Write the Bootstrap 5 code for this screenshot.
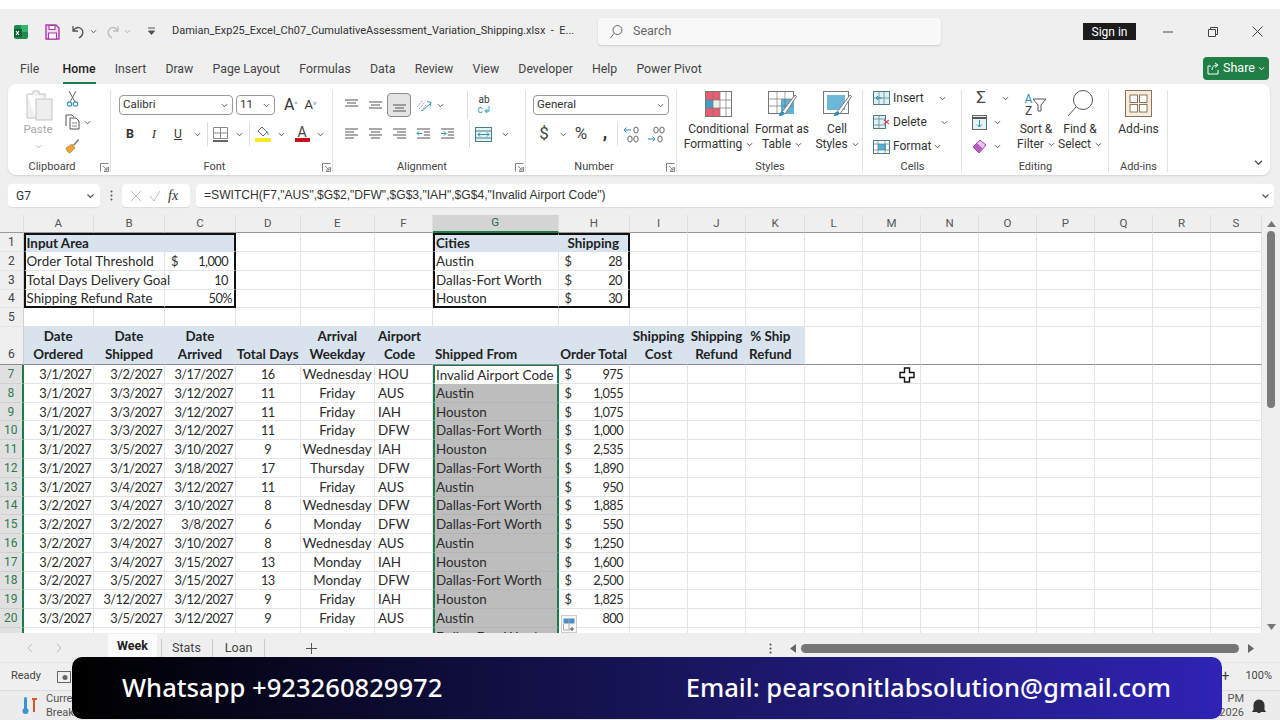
<!DOCTYPE html>
<html lang="en">
<head>
<meta charset="utf-8">
<title>Excel</title>
<link href="https://cdn.jsdelivr.net/npm/bootstrap@5.3.0/dist/css/bootstrap.min.css" rel="stylesheet">
<style>
html,body{margin:0;width:1280px;height:720px;overflow:hidden}
body{background:#efefef;font-family:Roboto,"Liberation Sans",sans-serif;font-size:12px;color:#333;position:relative}
svg{display:block;flex:none}
.strip{height:9px;background:#fff}
.titlebar{height:45px;padding-left:14px}
.doc-title{margin-left:9px;width:426px;font-size:11px;color:#333;white-space:nowrap}
.search{width:343px;height:27px;background:#f8f8f8;border-radius:4px;box-shadow:0 1px 2px #ccc;padding-left:10px;color:#666;gap:9px;font-size:12.5px}
.signin{width:53px;height:17px;background:#1c1c1c;color:#fff;font-size:12px;margin-left:142px}
.winbtn{width:45px}
.tabs{height:27px;margin-top:1px;margin-bottom:2px;padding:1px 11px 0 20px;gap:19.2px;font-size:12.3px;color:#444}
.tab-home{position:relative;color:#222;font-weight:500;margin-left:4px}
.tab-home::after{content:"";position:absolute;left:0;right:0;bottom:-6px;height:2px;background:#1b7c4b}
.share{width:66px;height:23px;background:#1f7f45;color:#fff;border-radius:4px;gap:3px;font-size:12.5px;margin-top:-1px}
.ribbon{height:91px;margin:0 10px 0 8px;background:#fff;border-radius:8px;box-shadow:0 1px 2px #d4d4d4}
.grp{display:flex;flex-direction:column;position:relative;padding-top:6px}
.grp::after{content:"";position:absolute;right:0;top:6px;bottom:3px;width:1px;background:#e2e2e2}
.g-clip{width:103px}.g-font{width:222px}.g-align{width:193px}.g-num{width:151px}.g-sty{width:186px}.g-cell{width:99px}.g-edit{width:147px}.g-add{width:59px}
.gbody{height:69px;flex:none}
.lbl{display:grid;grid-template-columns:1fr auto 1fr;align-items:center;font-size:11px;color:#444;padding-right:2px;height:16px}
.lbl svg{justify-self:end}
.lbl .ml{margin-right:13px}
.ib{display:flex;align-items:center;justify-content:center;height:24px;width:24px;flex:none}
.ib.w12{width:12px}.ib.w14{width:14px}
.vsep{width:1px;height:24px;background:#ddd;flex:none}
.rowa{height:24px;margin-top:3px}
.rowb{height:24px;margin-top:5px}
.combo{border:1px solid #999;border-radius:4px;background:#fff;padding:0 4px 0 3px;font-size:11.5px;color:#333;height:20px}
.big{display:flex;flex-direction:column;align-items:center;text-align:center;line-height:15px;font-size:12px;color:#333}
.big .art{height:27px;margin-bottom:5px;display:flex;align-items:flex-end}
.cellrow{height:24px;gap:3px}
.up{margin-top:-4px}
.formula{height:23px;margin:9px 6px 8px 8px;gap:3px}
.fbox{background:#fff;border-radius:4px;height:23px;box-shadow:0 1px 1px #dcdcdc}
.namebox{width:92px;padding:0 5px 0 8px;font-size:12px}
.fxbox{width:68px;padding:0 8px;gap:7px;color:#999;margin-left:6px}
.ftext{flex:1;padding:0 4px 0 8px;font-family:"Liberation Sans",sans-serif;font-size:12.1px;color:#333;margin-left:3px}
.sheet{height:419px}
.gridwrap{width:1262px;height:418px;overflow:hidden;background:#fff}
.grid{display:grid;grid-template-columns:23.5px 70.5px 71px 71px 64.5px 74.5px 58px 125.5px 71.5px 58px 58px 59px 58px 58px 58px 58px 58px 58px 58px 51px;grid-template-rows:18.2px repeat(5,18.8px) 38px repeat(15,18.77px);width:1262px;margin:0;font-family:Lato,"Liberation Sans",sans-serif;font-size:13.4px;color:#2c2c2c}
.grid thead,.grid tbody,.grid tr{display:contents}
.grid td,.grid th{display:flex;align-items:center;padding:0 3px;white-space:nowrap;box-sizing:border-box;border-right:1px solid #e4e4e4;border-bottom:1px solid #e4e4e4;font-weight:400;min-width:0}
.grid thead th{background:#efefef;justify-content:center;color:#555;font-family:Roboto,sans-serif;font-size:11.5px;border-right:1px solid #dedede;border-bottom:1px solid #999}
.grid thead th.on{background:#d4d4d4;color:#2a6a47;border-bottom:2px solid #1b7c4b}
.grid tbody th{background:#efefef;justify-content:center;color:#444;font-family:Roboto,sans-serif;font-size:12px;border-right:1px solid #cfcfcf;padding:0}
.grid tbody th.on{background:#e0e0e0;color:#2f7a52;border-right:2px solid #1b7c4b;border-bottom-color:#d0d0d0}
.grid .s2{grid-column:span 2;border-right-color:#e4e4e4}
.grid .s3{grid-column:span 3}
.grid .fill{background:#d8e3ee;font-weight:700;color:#222;border-color:#d8e3ee}
.grid .hd{flex-direction:column;justify-content:flex-end;align-items:center;line-height:18.7px;text-align:center;padding:0}
.grid .hl{align-items:flex-start;padding-left:3px}
.grid .hk{align-items:flex-start;padding-left:3px}
.grid .line{border-bottom:1px solid #8d8d8d}
.r{justify-content:flex-end}.c{justify-content:center}
.grid td.r,.grid td.cur,.grid td.c:nth-child(5){font-size:12.8px;letter-spacing:-.55px;padding-top:1px}
.grid td.rp{padding-right:2px}
.grid td.rm{padding-right:6px}
.grid td.cur{justify-content:space-between;padding:1px 6px 0}
.grid td.bT{border-top:2px solid #111}
.grid td.bB{border-bottom:2px solid #111}
.grid td.bL{border-left:2px solid #111;padding-left:1px}
.grid td.bR{border-right:2px solid #111}
.grid td.sg{border-left:2px solid #1b7c4b;border-right:2px solid #1b7c4b;background:#bdbdbd;border-bottom-color:#b4b4b4;padding-left:1px}
.grid td.sg1{background:#fff;border-top:1px solid #1b7c4b;border-bottom-color:#fff}
.vscroll{width:18px;padding-top:6px}
.thumb-v{width:8px;height:177px;background:#7b7b7b;border-radius:4px;margin:4px 0 auto}
.sheettabs{height:28px;padding-left:26px;color:#444;font-size:12.5px}
.stab{height:28px;display:flex;align-items:center;margin-left:5px;padding:0 5px}
.stab-on{background:#fbfbfb;width:49px;margin-left:45px;padding:0 0 3px;border-radius:0 0 4px 4px;font-weight:700;font-size:12.5px;color:#222;position:relative}
.stab-on::after{content:"";position:absolute;left:8px;right:8px;bottom:3px;height:2px;background:#1b7c4b}
.tsep{width:1px;height:18px;background:#ccc}
.thumb-h{width:438px;height:9px;background:#767676;border-radius:5px}
.status{height:28px;padding:0 8px 0 11px;border-top:1px solid #e4e4e4;font-size:11px;color:#444}
.taskbar{height:30px;background:#ececec;padding:0 14px 0 22px;border-top:1px solid #ddd;font-size:11px;color:#555}
.taskbar small{font-size:11px;line-height:14px}
.banner{position:absolute;left:72px;top:657px;width:1150px;height:62px;border-radius:10px;background:linear-gradient(90deg,#000 0%,#0b0a2c 25%,#1a1660 55%,#2e23b4 100%);color:#fff;padding:0 51px 0 50px;font-family:"Noto Sans",sans-serif;font-weight:500;font-size:25.6px;z-index:5}
.qa{position:absolute;left:561px;top:615px;width:16px;height:18px;background:#f7f7f7;border:1px solid #ccc;z-index:3}
.cursor{position:absolute;left:899px;top:367px;z-index:3}
</style>
</head>
<body>
<svg width="0" height="0" class="position-absolute">
<defs>
<symbol id="cv" viewBox="0 0 8 6"><path d="M1 1.5 4 4.5 7 1.5" fill="none" stroke="#555" stroke-width="1.2"/></symbol>
<symbol id="cvw" viewBox="0 0 8 6"><path d="M1 1.5 4 4.5 7 1.5" fill="none" stroke="#fff" stroke-width="1.2"/></symbol>
<symbol id="lau" viewBox="0 0 9 9"><path d="M.5 8.5V.5h8M8.5 4v4.5H4M3 3l4 4M7 4v3H4" fill="none" stroke="#777" stroke-width=".9"/></symbol>
</defs>
</svg>

<div class="strip"></div>

<div class="titlebar d-flex align-items-center">
  <svg width="14" height="14" viewBox="0 0 14 14"><rect x="0" y="0" width="14" height="14" rx="2" fill="#1f8a50"/><rect x="7" y="0" width="7" height="7" fill="#35b36f"/><rect x="0" y="4" width="8" height="8" fill="#0f5f33"/><path d="M2 6l3 4M5 6l-3 4" stroke="#fff" stroke-width="1.1"/></svg>
  <div class="ib" style="margin-left:12px"><svg width="15" height="16" viewBox="0 0 15 16"><path d="M1 1h10l3 3v11H1z" fill="#f3dcf3" stroke="#a83ca8" stroke-width="1.4"/><path d="M4 1.5h6v4H4zM3.5 9h8v6h-8z" fill="#fff" stroke="#a83ca8" stroke-width="1.2"/></svg></div>
  <div class="ib" style="margin-left:2px"><svg width="15" height="14" viewBox="0 0 15 14"><path d="M2 1v5h5M2 6c2-3 5-4 7-3 4 2 4 7-1 10" fill="none" stroke="#555" stroke-width="1.3"/></svg></div>
  <svg width="7" height="5"><use href="#cv"/></svg>
  <div class="ib" style="margin-left:3px"><svg width="15" height="14" viewBox="0 0 15 14"><path d="M13 1v5H8M13 6c-2-3-5-4-7-3-4 2-4 7 1 10" fill="none" stroke="#bdbdbd" stroke-width="1.3"/></svg></div>
  <svg width="7" height="5" opacity=".4"><use href="#cv"/></svg>
  <div class="ib" style="margin-left:8px"><svg width="9" height="9" viewBox="0 0 9 9"><path d="M1 1h7M1.5 4 4.500 7.500 7.500 4z" fill="#555" stroke="#555"/></svg></div>
  <div class="doc-title">Damian_Exp25_Excel_Ch07_CumulativeAssessment_Variation_Shipping.xlsx &nbsp;-&nbsp; E...</div>
  <div class="search d-flex align-items-center">
    <svg width="16" height="16" viewBox="0 0 16 16"><circle cx="9.500" cy="6" r="4.500" fill="none" stroke="#666" stroke-width="1"/><path d="M6 9.500 2.500 14" stroke="#666" stroke-width="1"/></svg>
    <span>Search</span>
  </div>
  <div class="signin d-flex align-items-center justify-content-center">Sign in</div>
  <div class="winbtn d-flex justify-content-center" style="margin-left:9px"><svg width="10" height="10" viewBox="0 0 10 10"><path d="M0 5h10" stroke="#444"/></svg></div>
  <div class="winbtn d-flex justify-content-center"><svg width="10" height="10" viewBox="0 0 10 10"><path d="M.5 2.500h7v7h-7zM2.500 2.500v-2h7v7h-2" fill="none" stroke="#444"/></svg></div>
  <div class="winbtn d-flex justify-content-center"><svg width="11" height="11" viewBox="0 0 11 11"><path d="M.5.500l10 10M10.500.500l-10 10" stroke="#444"/></svg></div>
</div>

<div class="tabs d-flex align-items-center">
  <span>File</span><span class="tab-home">Home</span><span>Insert</span><span>Draw</span><span>Page Layout</span><span>Formulas</span><span>Data</span><span>Review</span><span>View</span><span>Developer</span><span>Help</span><span>Power Pivot</span>
  <div class="share d-flex align-items-center justify-content-center ms-auto">
    <svg width="13" height="13" viewBox="0 0 13 13"><path d="M4 4H1v8h10V8M5 8c0-3 2-5 5-5M8 1l3 2-3 2.500" fill="none" stroke="#fff"/></svg>
    <span>Share</span>
    <svg width="7" height="5"><use href="#cvw"/></svg>
  </div>
</div>

<div class="ribbon d-flex">
  <!-- Clipboard -->
  <div class="grp g-clip">
    <div class="gbody d-flex">
      <div class="big" style="width:46px;margin-left:7px;font-size:11.5px;color:#aaa;line-height:13px">
        <svg width="29" height="31" viewBox="0 0 29 31"><path d="M3 4h6V1h6v3h6v4M3 4v24h9" fill="#f1f1f1" stroke="#c4c4c4"/><rect x="12" y="9" width="16" height="21" fill="#eee" stroke="#c4c4c4"/></svg>
        <span style="margin-top:2px">Paste</span>
        <svg width="7" height="5" class="mt-2" opacity=".4"><use href="#cv"/></svg>
      </div>
      <div class="d-flex flex-column up" style="margin-left:-1px">
        <div class="ib"><svg width="13" height="17" viewBox="0 0 13 17"><path d="M3 1 9 12M10 1 4 12" stroke="#666"/><circle cx="3.500" cy="14" r="2.200" fill="none" stroke="#3c93a8" stroke-width="1.200"/><circle cx="9.500" cy="14" r="2.200" fill="none" stroke="#3c93a8" stroke-width="1.200"/></svg></div>
        <div class="d-flex align-items-center"><div class="ib"><svg width="15" height="16" viewBox="0 0 15 16"><path d="M1 12V1h6l2 2M5 4h6l3 3v8H5z" fill="#fff" stroke="#555"/><path d="M7 9h5M7 12h5" stroke="#888"/></svg></div><svg width="7" height="5"><use href="#cv"/></svg></div>
        <div class="ib"><svg width="16" height="16" viewBox="0 0 16 16"><path d="M9 7l5-6 1 1-5 6z" fill="#777"/><path d="M2 10l6-4 3 4-5 5c-2 0-4-3-4-5z" fill="#e8a33d" stroke="#b57a20" stroke-width=".6"/></svg></div>
      </div>
    </div>
    <div class="lbl"><span></span><span class="ml">Clipboard</span><svg width="9" height="9"><use href="#lau"/></svg></div>
  </div>
  <!-- Font -->
  <div class="grp g-font">
    <div class="gbody">
      <div class="rowa d-flex align-items-center" style="padding-left:8px;gap:3px">
        <div class="combo d-flex align-items-center justify-content-between" style="width:114px"><span>Calibri</span><svg width="7" height="5"><use href="#cv"/></svg></div>
        <div class="combo d-flex align-items-center justify-content-between" style="width:39px"><span>11</span><svg width="7" height="5"><use href="#cv"/></svg></div>
        <span style="font-size:16px;margin-left:6px">A<sup style="font-size:7px;color:#777">^</sup></span>
        <span style="font-size:13px;margin-left:4px">A<sup style="font-size:7px;color:#777">˅</sup></span>
      </div>
      <div class="rowb d-flex align-items-center" style="padding-left:7px">
        <div class="ib fw-bold" style="font-size:12.5px">B</div><div class="ib fst-italic" style="font-family:'Liberation Serif',serif;font-size:13px">I</div><div class="ib text-decoration-underline">U</div>
        <div class="ib w14"><svg width="7" height="5"><use href="#cv"/></svg></div><div class="vsep" style="margin:0 3px"></div>
        <div class="ib" style="margin-left:-3px;margin-right:1px"><svg width="15" height="15" viewBox="0 0 15 15"><path d="M.5.500h14v11H.5zM7.500.500v11M.5 6h14" fill="none" stroke="#888"/><path d="M0 14h15" stroke="#333" stroke-width="1.500"/></svg></div>
        <div class="ib w12"><svg width="7" height="5"><use href="#cv"/></svg></div><div class="vsep" style="margin:0 4px"></div>
        <div class="ib" style="margin-left:-3px"><svg width="16" height="16" viewBox="0 0 16 16"><path d="M7 1l5 5-4 4-5-5z" fill="#fff" stroke="#666"/><path d="M11 5c2 1 2 3 2 4" fill="none" stroke="#2d8fb0"/><rect x="0" y="12" width="16" height="4" fill="#f6ec2a"/></svg></div>
        <div class="ib w12"><svg width="7" height="5"><use href="#cv"/></svg></div>
        <div class="ib" style="margin-left:3px"><div class="d-flex flex-column align-items-center" style="line-height:12px;font-size:14px;color:#444">A<svg width="15" height="4"><rect width="15" height="4" fill="#c8101e"/></svg></div></div>
        <div class="ib w12"><svg width="7" height="5"><use href="#cv"/></svg></div>
      </div>
    </div>
    <div class="lbl"><span></span><span class="ml">Font</span><svg width="9" height="9"><use href="#lau"/></svg></div>
  </div>
  <!-- Alignment -->
  <div class="grp g-align">
    <div class="gbody" style="padding-left:6px">
      <div class="rowa d-flex align-items-center">
        <div class="ib"><svg width="15" height="13" viewBox="0 0 15 13"><path d="M1 1h13M3 4h9M1 7h13" stroke="#555"/></svg></div>
        <div class="ib"><svg width="15" height="13" viewBox="0 0 15 13"><path d="M1 3h13M3 6h9M1 9h13" stroke="#555"/></svg></div>
        <div class="ib" style="background:#e4e4e4;border:1px solid #8c8c8c;border-radius:4px"><svg width="15" height="13" viewBox="0 0 15 13"><path d="M1 6h13M3 9h9M1 12h13" stroke="#555"/></svg></div>
        <div class="ib"><svg width="17" height="15" viewBox="0 0 17 15"><path d="M2 9l6-7M4 11l6-7M6 13l6-7" stroke="#999" stroke-dasharray="2 1"/><path d="M7 13 16 5M12 3.500l4 1-1 4" fill="none" stroke="#3a9ab5"/></svg></div>
        <div class="ib w14" style="margin-left:-2px"><svg width="7" height="5"><use href="#cv"/></svg></div>
        <div class="vsep" style="margin:0 2px 0 20px;height:28px"></div>
        <div class="ib" style="margin-left:2px;font-size:10px;line-height:10px;flex-direction:column">ab<span style="color:#3a9ab5">c↲</span></div>
      </div>
      <div class="rowb d-flex align-items-center">
        <div class="ib"><svg width="15" height="12" viewBox="0 0 15 12"><path d="M1 1h13M1 4h9M1 7h13M1 10h9" stroke="#555"/></svg></div>
        <div class="ib"><svg width="15" height="12" viewBox="0 0 15 12"><path d="M1 1h13M3 4h9M1 7h13M3 10h9" stroke="#555"/></svg></div>
        <div class="ib"><svg width="15" height="12" viewBox="0 0 15 12"><path d="M1 1h13M5 4h9M1 7h13M5 10h9" stroke="#555"/></svg></div>
        <div class="ib"><svg width="15" height="12" viewBox="0 0 15 12"><path d="M1 1h13M8 4h6M8 7h6M1 10h13" stroke="#555"/><path d="M6 5.500H1M3 3.500l-2 2 2 2" fill="none" stroke="#2d8fb0"/></svg></div>
        <div class="ib"><svg width="15" height="12" viewBox="0 0 15 12"><path d="M1 1h13M8 4h6M8 7h6M1 10h13" stroke="#555"/><path d="M1 5.500h5M4 3.500l2 2-2 2" fill="none" stroke="#2d8fb0"/></svg></div>
        <div class="vsep" style="margin-left:10px;height:28px"></div>
        <div class="ib" style="margin-left:1px"><svg width="17" height="15" viewBox="0 0 17 15"><rect x=".5" y=".5" width="16" height="14" fill="#e4f3f3" stroke="#4a7f86"/><path d="M.5 4h16M.5 11h16" stroke="#4a7f86"/><path d="M3 7.500h11M5 5.500l-2 2 2 2M12 5.500l2 2-2 2" fill="none" stroke="#2d8fb0"/></svg></div>
        <div class="ib w14" style="margin-left:3px"><svg width="7" height="5"><use href="#cv"/></svg></div>
      </div>
    </div>
    <div class="lbl"><span></span><span class="ml">Alignment</span><svg width="9" height="9"><use href="#lau"/></svg></div>
  </div>
  <!-- Number -->
  <div class="grp g-num">
    <div class="gbody">
      <div class="rowa d-flex align-items-center" style="padding-left:7px">
        <div class="combo d-flex align-items-center justify-content-between" style="width:136px"><span>General</span><svg width="7" height="5"><use href="#cv"/></svg></div>
      </div>
      <div class="rowb d-flex align-items-center" style="padding-left:6px">
        <div class="ib" style="font-size:17px;color:#444">$</div>
        <div class="ib w14"><svg width="7" height="5"><use href="#cv"/></svg></div>
        <div class="ib" style="font-size:17px;margin-left:-1px;color:#444">%</div>
        <div class="ib fw-bold" style="font-size:18px;margin-top:-6px;color:#333">,</div>
        <div class="vsep" style="margin:0 1px 0 0"></div>
        <div class="ib" style="margin-left:1px"><svg width="19" height="17" viewBox="0 0 19 17"><path d="M8 4H1M3.500 1.500 1 4l2.500 2.500" fill="none" stroke="#2d8fb0"/><ellipse cx="13" cy="4" rx="2.200" ry="3" fill="none" stroke="#666"/><ellipse cx="7" cy="13" rx="2.200" ry="3" fill="none" stroke="#666"/><ellipse cx="13" cy="13" rx="2.200" ry="3" fill="none" stroke="#666"/></svg></div>
        <div class="ib"><svg width="19" height="17" viewBox="0 0 19 17"><path d="M1 13h7M5.500 10.500 8 13l-2.500 2.500" fill="none" stroke="#2d8fb0"/><ellipse cx="9" cy="4" rx="2.200" ry="3" fill="none" stroke="#666"/><ellipse cx="15" cy="4" rx="2.200" ry="3" fill="none" stroke="#666"/><ellipse cx="13" cy="13" rx="2.200" ry="3" fill="none" stroke="#666"/></svg></div>
      </div>
    </div>
    <div class="lbl"><span></span><span class="ml">Number</span><svg width="9" height="9"><use href="#lau"/></svg></div>
  </div>
  <!-- Styles -->
  <div class="grp g-sty">
    <div class="gbody d-flex" style="padding-left:9px">
      <div class="big" style="width:65px">
        <div class="art"><svg width="27" height="26" viewBox="0 0 27 26"><rect x=".5" y=".5" width="26" height="25" fill="#fff" stroke="#777"/><rect x="1" y="1" width="14" height="8" fill="#e85d72"/><rect x="1" y="9" width="7" height="8" fill="#3d9fc7"/><rect x="8" y="9" width="7" height="8" fill="#eee"/><rect x="1" y="17" width="14" height="8" fill="#e85d72"/><path d="M8 .5v25M15 .5v25M21 .5v25M.5 9h26M.5 17h26" stroke="#777" stroke-width=".7" fill="none"/></svg></div>
        <span>Conditional</span><span class="d-flex align-items-center gap-1">Formatting<svg width="7" height="5"><use href="#cv"/></svg></span>
      </div>
      <div class="big" style="width:62px">
        <div class="art"><svg width="29" height="28" viewBox="0 0 29 28"><rect x=".5" y="2.500" width="25" height="22" fill="#fff" stroke="#777"/><rect x="13" y="10" width="13" height="15" fill="#5cb2d6"/><path d="M9 2.500v22M17 2.500v22M.5 10h25M.5 17h25" stroke="#777" stroke-width=".7"/><path d="M14 23 27 6l1.500 1.500L17 25z" fill="#fff" stroke="#777"/><path d="M11 27c0-3 2-5 5-4 1 3-2 4-5 4z" fill="#2d8fb0"/></svg></div>
        <span>Format as</span><span class="d-flex align-items-center gap-1">Table<svg width="7" height="5"><use href="#cv"/></svg></span>
      </div>
      <div class="big" style="width:44px;margin-left:2px">
        <div class="art"><svg width="29" height="28" viewBox="0 0 29 28"><rect x=".5" y="2.500" width="25" height="22" fill="#fff" stroke="#777"/><rect x="4" y="6" width="18" height="15" fill="#6cb8db"/><path d="M14 23 27 6l1.500 1.500L17 25z" fill="#fff" stroke="#777"/><path d="M11 27c0-3 2-5 5-4 1 3-2 4-5 4z" fill="#2d8fb0"/></svg></div>
        <span>Cell</span><span class="d-flex align-items-center gap-1">Styles<svg width="7" height="5"><use href="#cv"/></svg></span>
      </div>
    </div>
    <div class="lbl" style="padding-right:0"><span></span><span>Styles</span><span></span></div>
  </div>
  <!-- Cells -->
  <div class="grp g-cell">
    <div class="gbody" style="padding-left:10px">
      <div class="up">
      <div class="cellrow d-flex align-items-center">
        <svg width="17" height="14" viewBox="0 0 17 14"><rect x=".5" y=".5" width="16" height="13" fill="#dff0f5" stroke="#4d7f8a"/><path d="M6 .5v13M11 .5v13M.5 7h16" stroke="#4d7f8a" stroke-width=".7"/><path d="M9 7H3M5 5 3 7l2 2" fill="none" stroke="#2d8fb0"/></svg>
        <span style="width:39px">Insert</span><svg class="ms-1" width="7" height="5"><use href="#cv"/></svg>
      </div>
      <div class="cellrow d-flex align-items-center">
        <svg width="17" height="14" viewBox="0 0 17 14"><rect x=".5" y=".5" width="12" height="13" fill="#dff0f5" stroke="#4d7f8a"/><path d="M.5 4h12M.5 10h12M6 .5v13" stroke="#4d7f8a" stroke-width=".7"/><path d="M11 5l5 4M16 5l-5 4" stroke="#d9435a" stroke-width="1.200"/></svg>
        <span style="width:41px">Delete</span><svg class="ms-1" width="7" height="5"><use href="#cv"/></svg>
      </div>
      <div class="cellrow d-flex align-items-center">
        <svg width="17" height="15" viewBox="0 0 17 15"><rect x=".5" y="1.500" width="16" height="13" fill="#fff" stroke="#4d7f8a"/><rect x="5" y="5" width="8" height="6" fill="#5cb2d6"/><path d="M5 1.500v13M12 1.500v13M.5 5h16M.5 11h16" stroke="#4d7f8a" stroke-width=".7"/></svg>
        <span>Format</span><svg width="7" height="5"><use href="#cv"/></svg>
      </div>
      </div>
    </div>
    <div class="lbl" style="padding-right:0"><span></span><span>Cells</span><span></span></div>
  </div>
  <!-- Editing -->
  <div class="grp g-edit">
    <div class="gbody d-flex">
      <div class="d-flex flex-column up" style="width:53px;padding-left:10px">
        <div class="cellrow d-flex align-items-center"><div class="ib" style="font-size:17px;width:18px;color:#444">Σ</div><svg style="margin-left:9px" width="7" height="5"><use href="#cv"/></svg></div>
        <div class="cellrow d-flex align-items-center"><svg width="15" height="15" viewBox="0 0 15 15"><rect x=".5" y=".5" width="14" height="14" fill="#e4f3f3" stroke="#666"/><path d="M.5 3h14" stroke="#555" stroke-width="2"/><path d="M7.500 5v7M5 9.500 7.500 12 10 9.500" fill="none" stroke="#2d8fb0"/></svg><svg class="ms-1" width="7" height="5"><use href="#cv"/></svg></div>
        <div class="cellrow d-flex align-items-center"><svg width="15" height="15" viewBox="0 0 15 15"><path d="M1 8 8 1l6 5-7 8z" fill="#e7c6ea" stroke="#a83ca8"/><path d="M1 8l6 6 4-4-6-6z" fill="#b85dc0"/></svg><svg class="ms-1" width="7" height="5"><use href="#cv"/></svg></div>
      </div>
      <div class="big" style="width:44px;margin-left:-1px">
        <div class="art"><span class="d-flex align-items-center" style="color:#444"><span class="d-flex flex-column" style="font-size:12px;line-height:12px"><span style="color:#2d8fb0">A</span><span>Z</span></span><svg width="15" height="14" viewBox="0 0 15 14"><path d="M1 1h13L9 7v6H6V7z" fill="none" stroke="#555"/></svg></span></div>
        <span>Sort &amp;</span><span class="d-flex align-items-center gap-1">Filter<svg width="7" height="5"><use href="#cv"/></svg></span>
      </div>
      <div class="big" style="width:44px">
        <div class="art"><svg width="28" height="28" viewBox="0 0 28 28"><circle cx="17" cy="11" r="9.500" fill="none" stroke="#555"/><path d="M10 18 2 27" stroke="#555"/></svg></div>
        <span>Find &amp;</span><span class="d-flex align-items-center gap-1">Select<svg width="7" height="5"><use href="#cv"/></svg></span>
      </div>
    </div>
    <div class="lbl" style="padding-right:0"><span></span><span>Editing</span><span></span></div>
  </div>
  <!-- Add-ins -->
  <div class="grp g-add">
    <div class="gbody">
      <div class="big">
        <div class="art"><svg width="27" height="27" viewBox="0 0 27 27"><rect x=".5" y=".5" width="26" height="26" fill="#f7ecdd" stroke="#8a7459"/><rect x="5" y="5" width="7.500" height="7.500" fill="#fff" stroke="#8a7459"/><rect x="14.500" y="5" width="7.500" height="7.500" fill="#fff" stroke="#8a7459"/><rect x="5" y="14.500" width="7.500" height="7.500" fill="#fff" stroke="#8a7459"/><rect x="14.500" y="14.500" width="7.500" height="7.500" fill="#fff" stroke="#8a7459"/></svg></div>
        <span>Add-ins</span>
      </div>
    </div>
    <div class="lbl" style="padding-right:0"><span></span><span>Add-ins</span><span></span></div>
  </div>
  <div class="d-flex align-items-end ms-auto" style="padding:0 6px 9px 0"><svg width="11" height="7"><use href="#cv"/></svg></div>
</div>

<div class="formula d-flex align-items-center">
  <div class="fbox namebox d-flex align-items-center justify-content-between"><span>G7</span><svg width="9" height="6"><use href="#cv"/></svg></div>
  <svg style="margin-left:7px" width="3" height="11" viewBox="0 0 3 11"><circle cx="1.500" cy="1.500" r="1" fill="#555"/><circle cx="1.500" cy="5.500" r="1" fill="#555"/><circle cx="1.500" cy="9.500" r="1" fill="#555"/></svg>
  <div class="fbox fxbox d-flex align-items-center">
    <svg width="12" height="12" viewBox="0 0 12 12"><path d="M1 1l10 10M11 1 1 11" stroke="#bbb"/></svg>
    <svg width="12" height="12" viewBox="0 0 12 12"><path d="M1 6l4 5 6-10" fill="none" stroke="#bbb"/></svg>
    <span style="font-family:'Liberation Serif',serif;font-style:italic;font-size:14px;color:#333">fx</span>
  </div>
  <div class="fbox ftext d-flex align-items-center justify-content-between"><span>=SWITCH(F7,"AUS",$G$2,"DFW",$G$3,"IAH",$G$4,"Invalid Airport Code")</span><svg width="9" height="6"><use href="#cv"/></svg></div>
</div>

<div class="sheet d-flex">
<div class="gridwrap">
<table class="grid">
<thead><tr><th></th><th>A</th><th>B</th><th>C</th><th>D</th><th>E</th><th>F</th><th class="on">G</th><th>H</th><th>I</th><th>J</th><th>K</th><th>L</th><th>M</th><th>N</th><th>O</th><th>P</th><th>Q</th><th>R</th><th>S</th></tr></thead>
<tbody>
<tr><th>1</th><td class="s3 fill bT bL bR">Input Area</td><td></td><td></td><td></td><td class="fill bT bL">Cities</td><td class="fill bT bR c">Shipping</td><td></td><td></td><td></td><td></td><td></td><td></td><td></td><td></td><td></td><td></td><td></td></tr>
<tr><th>2</th><td class="s2 bL">Order Total Threshold</td><td class="bR cur"><span>$</span><span>1,000</span></td><td></td><td></td><td></td><td class="bL">Austin</td><td class="bR cur"><span>$</span><span>28</span></td><td></td><td></td><td></td><td></td><td></td><td></td><td></td><td></td><td></td><td></td><td></td></tr>
<tr><th>3</th><td class="s2 bL">Total Days Delivery Goal</td><td class="bR r rm">10</td><td></td><td></td><td></td><td class="bL">Dallas-Fort Worth</td><td class="bR cur"><span>$</span><span>20</span></td><td></td><td></td><td></td><td></td><td></td><td></td><td></td><td></td><td></td><td></td><td></td></tr>
<tr><th>4</th><td class="s2 bL bB">Shipping Refund Rate</td><td class="bR bB r rp">50%</td><td></td><td></td><td></td><td class="bL bB">Houston</td><td class="bR bB cur"><span>$</span><span>30</span></td><td></td><td></td><td></td><td></td><td></td><td></td><td></td><td></td><td></td><td></td><td></td></tr>
<tr><th>5</th><td></td><td></td><td></td><td></td><td></td><td></td><td></td><td></td><td></td><td></td><td></td><td></td><td></td><td></td><td></td><td></td><td></td><td></td><td></td></tr>
<tr><th class="line" style="align-items:flex-end;padding-bottom:1px">6</th><td class="fill hd line">Date<br>Ordered</td><td class="fill hd line">Date<br>Shipped</td><td class="fill hd line">Date<br>Arrived</td><td class="fill hd line">Total Days</td><td class="fill hd line">Arrival<br>Weekday</td><td class="fill hd hl line">Airport<br>Code</td><td class="fill hd hl line" style="padding-left:2px">Shipped From</td><td class="fill hd line">Order Total</td><td class="fill hd line">Shipping<br>Cost</td><td class="fill hd line">Shipping<br>Refund</td><td class="fill hd hk line">% Ship<br>Refund</td><td class="line"></td><td class="line"></td><td class="line"></td><td class="line"></td><td class="line"></td><td class="line"></td><td class="line"></td><td class="line"></td></tr>
<tr><th class="on">7</th><td class="r rp">3/1/2027</td><td class="r rp">3/2/2027</td><td class="r rp">3/17/2027</td><td class="c">16</td><td class="c">Wednesday</td><td>HOU</td><td class="sg sg1">Invalid Airport Code</td><td class="cur"><span>$</span><span>975</span></td><td></td><td></td><td></td><td></td><td></td><td></td><td></td><td></td><td></td><td></td><td></td></tr>
<tr><th class="on">8</th><td class="r rp">3/1/2027</td><td class="r rp">3/3/2027</td><td class="r rp">3/12/2027</td><td class="c">11</td><td class="c">Friday</td><td>AUS</td><td class="sg">Austin</td><td class="cur"><span>$</span><span>1,055</span></td><td></td><td></td><td></td><td></td><td></td><td></td><td></td><td></td><td></td><td></td><td></td></tr>
<tr><th class="on">9</th><td class="r rp">3/1/2027</td><td class="r rp">3/3/2027</td><td class="r rp">3/12/2027</td><td class="c">11</td><td class="c">Friday</td><td>IAH</td><td class="sg">Houston</td><td class="cur"><span>$</span><span>1,075</span></td><td></td><td></td><td></td><td></td><td></td><td></td><td></td><td></td><td></td><td></td><td></td></tr>
<tr><th class="on">10</th><td class="r rp">3/1/2027</td><td class="r rp">3/3/2027</td><td class="r rp">3/12/2027</td><td class="c">11</td><td class="c">Friday</td><td>DFW</td><td class="sg">Dallas-Fort Worth</td><td class="cur"><span>$</span><span>1,000</span></td><td></td><td></td><td></td><td></td><td></td><td></td><td></td><td></td><td></td><td></td><td></td></tr>
<tr><th class="on">11</th><td class="r rp">3/1/2027</td><td class="r rp">3/5/2027</td><td class="r rp">3/10/2027</td><td class="c">9</td><td class="c">Wednesday</td><td>IAH</td><td class="sg">Houston</td><td class="cur"><span>$</span><span>2,535</span></td><td></td><td></td><td></td><td></td><td></td><td></td><td></td><td></td><td></td><td></td><td></td></tr>
<tr><th class="on">12</th><td class="r rp">3/1/2027</td><td class="r rp">3/1/2027</td><td class="r rp">3/18/2027</td><td class="c">17</td><td class="c">Thursday</td><td>DFW</td><td class="sg">Dallas-Fort Worth</td><td class="cur"><span>$</span><span>1,890</span></td><td></td><td></td><td></td><td></td><td></td><td></td><td></td><td></td><td></td><td></td><td></td></tr>
<tr><th class="on">13</th><td class="r rp">3/1/2027</td><td class="r rp">3/4/2027</td><td class="r rp">3/12/2027</td><td class="c">11</td><td class="c">Friday</td><td>AUS</td><td class="sg">Austin</td><td class="cur"><span>$</span><span>950</span></td><td></td><td></td><td></td><td></td><td></td><td></td><td></td><td></td><td></td><td></td><td></td></tr>
<tr><th class="on">14</th><td class="r rp">3/2/2027</td><td class="r rp">3/4/2027</td><td class="r rp">3/10/2027</td><td class="c">8</td><td class="c">Wednesday</td><td>DFW</td><td class="sg">Dallas-Fort Worth</td><td class="cur"><span>$</span><span>1,885</span></td><td></td><td></td><td></td><td></td><td></td><td></td><td></td><td></td><td></td><td></td><td></td></tr>
<tr><th class="on">15</th><td class="r rp">3/2/2027</td><td class="r rp">3/2/2027</td><td class="r rp">3/8/2027</td><td class="c">6</td><td class="c">Monday</td><td>DFW</td><td class="sg">Dallas-Fort Worth</td><td class="cur"><span>$</span><span>550</span></td><td></td><td></td><td></td><td></td><td></td><td></td><td></td><td></td><td></td><td></td><td></td></tr>
<tr><th class="on">16</th><td class="r rp">3/2/2027</td><td class="r rp">3/4/2027</td><td class="r rp">3/10/2027</td><td class="c">8</td><td class="c">Wednesday</td><td>AUS</td><td class="sg">Austin</td><td class="cur"><span>$</span><span>1,250</span></td><td></td><td></td><td></td><td></td><td></td><td></td><td></td><td></td><td></td><td></td><td></td></tr>
<tr><th class="on">17</th><td class="r rp">3/2/2027</td><td class="r rp">3/4/2027</td><td class="r rp">3/15/2027</td><td class="c">13</td><td class="c">Monday</td><td>IAH</td><td class="sg">Houston</td><td class="cur"><span>$</span><span>1,600</span></td><td></td><td></td><td></td><td></td><td></td><td></td><td></td><td></td><td></td><td></td><td></td></tr>
<tr><th class="on">18</th><td class="r rp">3/2/2027</td><td class="r rp">3/5/2027</td><td class="r rp">3/15/2027</td><td class="c">13</td><td class="c">Monday</td><td>DFW</td><td class="sg">Dallas-Fort Worth</td><td class="cur"><span>$</span><span>2,500</span></td><td></td><td></td><td></td><td></td><td></td><td></td><td></td><td></td><td></td><td></td><td></td></tr>
<tr><th class="on">19</th><td class="r rp">3/3/2027</td><td class="r rp">3/12/2027</td><td class="r rp">3/12/2027</td><td class="c">9</td><td class="c">Friday</td><td>IAH</td><td class="sg">Houston</td><td class="cur"><span>$</span><span>1,825</span></td><td></td><td></td><td></td><td></td><td></td><td></td><td></td><td></td><td></td><td></td><td></td></tr>
<tr><th class="on">20</th><td class="r rp">3/3/2027</td><td class="r rp">3/5/2027</td><td class="r rp">3/12/2027</td><td class="c">9</td><td class="c">Friday</td><td>AUS</td><td class="sg">Austin</td><td class="cur"><span></span><span>800</span></td><td></td><td></td><td></td><td></td><td></td><td></td><td></td><td></td><td></td><td></td><td></td></tr>
<tr><th class="on"></th><td></td><td></td><td></td><td></td><td></td><td></td><td class="sg">Dallas-Fort Worth</td><td></td><td></td><td></td><td></td><td></td><td></td><td></td><td></td><td></td><td></td><td></td><td></td></tr>
</tbody>
</table>
</div>
<div class="vscroll d-flex flex-column align-items-center">
  <svg width="9" height="6" viewBox="0 0 9 6"><path d="M0 6 4.500 0 9 6z" fill="#777"/></svg>
  <div class="thumb-v"></div>
  <svg class="mb-1" width="9" height="6" viewBox="0 0 9 6"><path d="M0 0 4.500 6 9 0z" fill="#777"/></svg>
</div>
</div>

<div class="sheettabs d-flex align-items-center">
  <svg width="7" height="10" viewBox="0 0 7 10"><path d="M6 1 2 5l4 4" fill="none" stroke="#bbb"/></svg>
  <svg style="margin-left:23px" width="7" height="10" viewBox="0 0 7 10"><path d="M1 1l4 4-4 4" fill="none" stroke="#bbb"/></svg>
  <div class="stab stab-on justify-content-center">Week</div>
  <div class="tsep ms-1"></div>
  <div class="stab">Stats</div>
  <div class="tsep" style="margin-left:6px"></div>
  <div class="stab" style="margin-left:7px">Loan</div>
  <div class="tsep" style="margin-left:7px"></div>
  <svg style="margin-left:41px" width="11" height="11" viewBox="0 0 11 11"><path d="M5.500 0v11M0 5.500h11" stroke="#555"/></svg>
  <svg style="margin-left:452px" width="3" height="11" viewBox="0 0 3 11"><circle cx="1.500" cy="1.500" r="1" fill="#444"/><circle cx="1.500" cy="5.500" r="1" fill="#444"/><circle cx="1.500" cy="9.500" r="1" fill="#444"/></svg>
  <svg style="margin-left:18px" width="6" height="9" viewBox="0 0 6 9"><path d="M6 0 0 4.500 6 9z" fill="#666"/></svg>
  <div class="thumb-h" style="margin-left:5px"></div>
  <svg style="margin-left:9px" width="6" height="9" viewBox="0 0 6 9"><path d="M0 0 6 4.500 0 9z" fill="#666"/></svg>
</div>

<div class="status d-flex align-items-center justify-content-between">
  <div class="d-flex align-items-center gap-3"><span>Ready</span><svg width="14" height="13" viewBox="0 0 14 13"><rect x=".5" y="1.500" width="13" height="11" fill="none" stroke="#666"/><circle cx="8" cy="7.500" r="2.500" fill="#666"/></svg></div>
  <div class="d-flex align-items-center gap-3"><span style="font-size:14px">+</span><span>100%</span></div>
</div>

<div class="taskbar d-flex align-items-center justify-content-between">
  <div class="d-flex align-items-center gap-2">
    <svg width="16" height="20" viewBox="0 0 16 20"><rect x="2" y="1" width="3" height="13" rx="1.500" fill="#3c93d0"/><circle cx="3.500" cy="15" r="3" fill="#3c93d0"/><path d="M10 3h5M12 3v13" stroke="#d9552b" stroke-width="2"/></svg>
    <div class="d-flex flex-column"><small>Current</small><small>Breaking</small></div>
  </div>
  <div class="d-flex align-items-center gap-2">
    <div class="d-flex flex-column text-end"><small>PM</small><small>2026</small></div>
    <svg width="14" height="16" viewBox="0 0 14 16"><path d="M2 12V7c0-3 2-5 5-5s5 2 5 5v5l1.500 1.500H.5zM5.500 14.500h3" fill="#333" stroke="#333"/></svg>
  </div>
</div>

<div class="qa d-flex flex-column justify-content-center align-items-center">
  <svg width="12" height="13" viewBox="0 0 12 13"><rect x=".5" y=".5" width="11" height="5" fill="#4d8fc4"/><path d="M.5 6v6h7M6 .5v11" stroke="#aaa" fill="none"/><path d="M9 9v4M7 11h4" stroke="#555"/></svg>
</div>
<svg class="cursor" width="16" height="16" viewBox="0 0 16 16"><path d="M5.500 1h5v4.500H15v5h-4.500V15h-5v-4.500H1v-5h4.500z" fill="#fff" stroke="#111" stroke-width="1.400"/></svg>

<div class="banner d-flex align-items-center justify-content-between">
  <span>Whatsapp +923260829972</span>
  <span>Email: pearsonitlabsolution@gmail.com</span>
</div>

<script src="https://cdn.jsdelivr.net/npm/bootstrap@5.3.0/dist/js/bootstrap.bundle.min.js"></script>
</body>
</html>
